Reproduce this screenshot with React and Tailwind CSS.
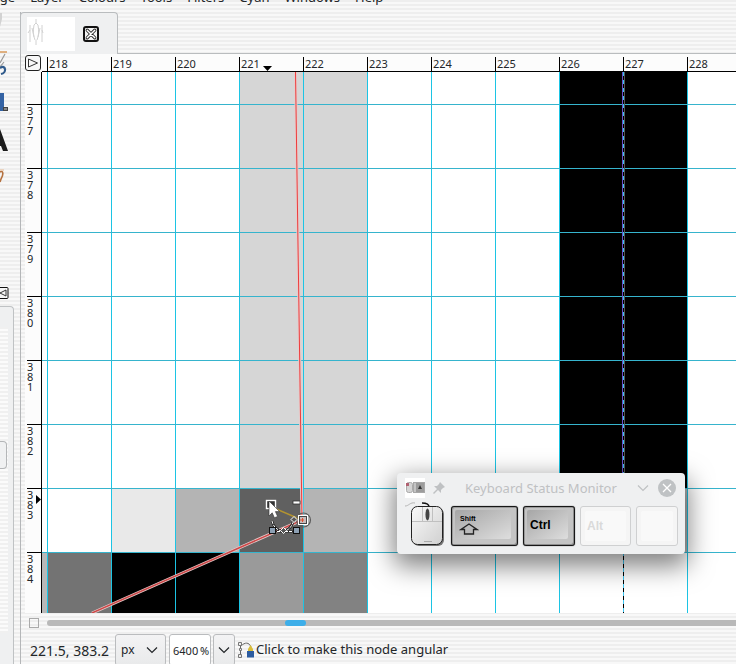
import React from 'react';

const COLUMNS = [218, 219, 220, 221, 222, 223, 224, 225, 226, 227, 228];
const ROWS = [377, 378, 379, 380, 381, 382, 383, 384];
const MENUS = ['Image', 'Layer', 'Colours', 'Tools', 'Filters', 'Cyan', 'Windows', 'Help'];

const STRIPES = 'bg-[repeating-linear-gradient(180deg,#eeeeee_0px,#eeeeee_2px,#f8f8f8_2px,#f8f8f8_4px)]';

// x, y, width, height and fill of each painted pixel
const PIXELS = [
    [197, 0, 128, 416, '#d6d6d6'],
    [517, 0, 128, 416, '#000000'],
    [69, 416, 64, 64, '#e9e9e9'],
    [133, 416, 64, 64, '#b4b4b4'],
    [197, 416, 64, 64, '#606060'],
    [261, 416, 64, 64, '#b4b4b4'],
    [517, 416, 128, 64, '#b4b4b4'],
    [0, 480, 5, 61, '#b8b8b8'],
    [5, 480, 64, 61, '#737373'],
    [69, 480, 128, 61, '#000000'],
    [197, 480, 64, 61, '#9a9a9a'],
    [261, 480, 64, 61, '#828282'],
];

const Chevron = ({ className }) => (
    <svg className={className} width="12" height="8" viewBox="0 0 12 8" fill="none" stroke="currentColor" strokeWidth="1.2">
        <path d="M1 1.5 6 6.5 11 1.5" />
    </svg>
);

const MenuBar = () => (
    <nav className="h-3 overflow-hidden">
        <div className="-mt-3 -ml-6 flex gap-[15px] text-[13px] leading-[18px]">
            {MENUS.map(menu => (
                <button key={menu} type="button">{menu}</button>
            ))}
        </div>
    </nav>
);

const ToolStrip = () => (
    <aside className="flex w-[21px] shrink-0 flex-col">
        <svg width="14" height="294" viewBox="0 0 14 294" className="shrink-0">
            <path d="M0 1h2v6l-2 8z" fill="#d2d2d2" />
            <path d="M0 40h7" stroke="#d89a5a" strokeWidth="1.5" />
            <path d="M0 51 5 42M0 55l4-5" stroke="#999" strokeWidth="1.2" fill="none" />
            <path d="M0 56c6-4 7 5 1 6" stroke="#315b8c" strokeWidth="2.2" fill="none" />
            <path d="M0 81h4v18H0z" fill="#3463a4" />
            <rect x="3.5" y="95.5" width="4" height="3" fill="#888" stroke="#444" />
            <path d="M0 117 8 139H3L1 134H0z" fill="#1b1b1b" />
            <path d="M0 160c3-2 4 2 1 7l-1 3" stroke="#b5713f" strokeWidth="1.6" fill="none" />
            <path d="M0 158h4" stroke="#e8c4a4" strokeWidth="1.2" />
            <rect x="-6" y="275.5" width="14" height="11" rx="1" fill="#f6f6f6" stroke="#111" />
            <path d="M6 278v6L0 281z" fill="none" stroke="#333" />
        </svg>
        <div className="flex w-[14px] flex-1 flex-col rounded-tr border-t border-r border-[#bfc2c4] bg-[#eff0f1]">
            <div className="mt-5 h-[306px] w-2 bg-[repeating-linear-gradient(180deg,#f0f0f0_0px,#f0f0f0_2px,#fbfbfb_2px,#fbfbfb_4px)]">
                <div className="mt-[114px] h-7 w-[7px] rounded-r border border-l-0 border-[#b4b6b8] bg-[#f0f1f2]"></div>
            </div>
        </div>
    </aside>
);

const ImageTab = () => (
    <div className="flex h-[42px] items-end">
        <div className="-ml-px flex h-[42px] w-[98px] items-center rounded-t border border-b-0 border-[#b9bcbe] bg-[#eff0f1] pl-1.5">
            <div className="h-[34px] w-12 bg-white">
                <svg width="20" height="34" viewBox="0 0 20 34" fill="none" stroke="#d2d2d2">
                    <path d="M9 2v5M7 8c-1 6-1 10 1 15M11 8c1 6 1 10-1 15M9 23v5M3 8v17M5 11l2 9M15 8v17M13 11l-2 9M7 8l2-2 2 2M3 13 1 16M15 13l1 3" />
                </svg>
            </div>
            <button type="button" aria-label="Close image" className="ml-2 flex size-4 items-center justify-center rounded-[3px] border-2 border-[#111] bg-[#f4f4f4]">
                <svg width="14" height="14" viewBox="0 0 14 14" className="shrink-0">
                    <path d="M3.2 3.2 10.8 10.8M10.8 3.2 3.2 10.8" stroke="#222" strokeWidth="3.2" strokeLinecap="round" />
                    <path d="M3.2 3.2 10.8 10.8M10.8 3.2 3.2 10.8" stroke="#fff" strokeWidth="1.5" strokeLinecap="round" />
                </svg>
            </button>
        </div>
        <div className="flex-1 self-stretch border-b border-[#b9bcbe]"></div>
    </div>
);

const TopRuler = () => (
    <div className="flex h-[18px] bg-[#fcfcfc]">
        <button type="button" aria-label="Image menu" className="mt-px mr-px flex size-4 shrink-0 items-center justify-center rounded-[3px] border border-[#222] bg-[#f8f8f8]">
            <svg width="14" height="14" viewBox="0 0 14 14" fill="none" stroke="#333" className="shrink-0">
                <path d="M2.5 3v8L11.5 7z" />
            </svg>
        </button>
        <div className="relative flex min-w-0 flex-1 overflow-hidden border-b border-black pl-[5px]">
            {COLUMNS.map(column => (
                <div key={column} className="mt-[3px] w-16 shrink-0 border-l border-black pl-px text-[11px] leading-[14px]">{column}</div>
            ))}
            <svg width="9" height="5" viewBox="0 0 9 5" className="absolute bottom-0 left-[221px]">
                <path d="M0 0h9L4.5 5z" />
            </svg>
        </div>
    </div>
);

const SideRuler = () => (
    <div className="relative w-[17px] shrink-0 overflow-hidden border-r border-black bg-[#fcfcfc] pt-8">
        {ROWS.map(row => (
            <div key={row} className="ml-0.5 flex h-16 flex-col border-t border-black pt-px text-[11px] leading-[10px]">
                {String(row).split('').map((digit, i) => (
                    <span key={i}>{digit}</span>
                ))}
            </div>
        ))}
        <svg width="5" height="9" viewBox="0 0 5 9" className="absolute top-[423px] right-0">
            <path d="M0 0v9L5 4.5z" />
        </svg>
    </div>
);

const Canvas = () => (
    <svg width="100%" height="541" className="block min-w-0 flex-1 bg-white">
        <defs>
            <pattern id="grid" x="5" y="32" width="64" height="64" patternUnits="userSpaceOnUse">
                <path d="M.5 0v64" stroke="#1cc4e4" />
                <path d="M0 .5h64" stroke="#36b4cd" />
            </pattern>
        </defs>
        {PIXELS.map(([x, y, w, h, fill]) => (
            <rect key={`${x}-${y}`} x={x} y={y} width={w} height={h} fill={fill} />
        ))}
        <rect width="100%" height="100%" fill="url(#grid)" />

        {/* selected layer edge */}
        <path d="M580.5 0V416" stroke="#6a50c8" />
        <path d="M582.5 0V416" stroke="#555" />
        <path d="M581.5 0V541" stroke="#000" />
        <path d="M581.5 0V541" stroke="#3cc4f0" strokeDasharray="4 4" />

        {/* path being edited */}
        <path d="M253.5 0 260 448 50 541" fill="none" stroke="#e6cccc" strokeWidth="3" />
        <path d="M253.5 0 260 448" fill="none" stroke="#ee3c3c" />
        <path d="M260 448 50 541" fill="none" stroke="#cc4848" strokeWidth="1.4" />
        <path d="M232 436 260 448" stroke="#b39430" strokeWidth="1.4" />
        <rect x="224.5" y="428.5" width="9" height="8" fill="#333" stroke="#fff" strokeWidth="1.4" />
        <circle cx="261.5" cy="448" r="7" fill="none" stroke="#5c5c5c" strokeWidth="1.2" />
        <rect x="256.5" y="443.5" width="9" height="9" fill="#bbb" stroke="#fff" />
        <rect x="257.5" y="444.5" width="7" height="7" fill="#c8bcbc" stroke="#444" />
        <path d="M258 448h4M260.5 446v4" stroke="#e05030" />
        <rect x="251" y="429" width="7" height="3" fill="#fff" stroke="#333" strokeWidth=".8" />

        {/* pointer with the node-edit badge */}
        <path d="M230 449c1 5 5 10 11 10s9-5 11-11" fill="none" stroke="#222" strokeWidth="2.4" />
        <path d="M231 459.500h22" stroke="#222" strokeWidth="2" />
        <path d="M231 459.500h22M230 449c1 5 5 10 11 10s9-5 11-11" fill="none" stroke="#fff" strokeDasharray="3 1" />
        <rect x="227.5" y="455.5" width="6" height="6" fill="#8da0b4" stroke="#111" />
        <rect x="251.5" y="455.5" width="6" height="6" fill="#8da0b4" stroke="#111" />
        <path d="M241.5 455.500l3 3-3 3-3-3zM252 444.5l3 3-3 3-3-3z" fill="#555" stroke="#fff" />
        <path d="M227 429v15l3.2-3.2 2.2 5 3.2-1.4-2.2-4.8h4.2z" fill="#fff" stroke="#333" strokeWidth=".6" />
    </svg>
);

const Key = ({ className, on, children }) => (
    <div className={`${className} flex h-10 shrink-0 rounded-[3px] border ${on
        ? 'border-[#171717] bg-[#c4c4c4] p-[3px] pr-1.5 pb-1.5 shadow-[inset_-1px_-1px_0_#8c8c8c,inset_1px_1px_0_#9a9a9a,0_0_1px_#222]'
        : 'border-[#cfd0d1] bg-[#f5f5f5] p-1'}`}>
        <div className={`flex flex-1 flex-col justify-center rounded-[2px] font-['Liberation_Sans',sans-serif] font-bold ${on
            ? 'bg-linear-to-br from-[#a6a6a6] to-[#dedede] text-black'
            : 'bg-[#f9f9f9] text-[#dadada]'}`}>
            {children}
        </div>
    </div>
);

const KeyboardMonitor = () => (
    <section className="absolute top-[473px] left-[397px] w-72 rounded-[4px] bg-[#eff0f1] pb-2 shadow-[0_9px_26px_3px_rgba(0,0,0,0.5)]">
        <header className="flex h-[29px] items-center pl-2 text-[#bfc1c3]">
            <svg width="20" height="20" viewBox="0 0 20 20" className="shrink-0">
                <path d="M0 0h20v20H0z" fill="#fff" />
                <rect x="1.5" y="4.5" width="6" height="10" rx="2" fill="#d4d4d4" stroke="#aaa" />
                <path d="M1 5h3v3H1z" fill="#b06070" />
                <rect x="8.5" y="4.5" width="11" height="10" fill="#c4c4c4" stroke="#a8a8a8" />
                <rect x="11" y="5" width="8" height="9" fill="#9c9c9c" />
                <path d="M13 11l2-4 2 4z" fill="#333" />
            </svg>
            <svg width="12" height="12" viewBox="0 0 12 12" className="ml-2 shrink-0" fill="currentColor">
                <path d="M7 0 12 5 10 6 8 8 8 11 5 8 1 12 0 11 4 7 1 4 4 4 6 2z" />
            </svg>
            <h2 className="ml-5 flex-1 text-[13px] leading-5 whitespace-nowrap">Keyboard Status Monitor</h2>
            <button type="button" aria-label="Minimise" className="mr-[9px]"><Chevron /></button>
            <button type="button" aria-label="Close" className="mr-[9px] flex size-[18px] items-center justify-center rounded-full bg-[#bfc2c4]">
                <svg width="10" height="10" viewBox="0 0 10 10" stroke="#fff" strokeWidth="1.3">
                    <path d="M1 1 9 9M9 1 1 9" />
                </svg>
            </button>
        </header>
        <div className="flex items-end gap-[5px] pr-[7px] pl-2">
            <svg width="41" height="44" viewBox="0 0 41 44" className="shrink-0">
                <defs>
                    <linearGradient id="mouse" x1="0" y1="0" x2="1" y2="1">
                        <stop offset="0" stopColor="#fafafa" />
                        <stop offset="1" stopColor="#d0d0d0" />
                    </linearGradient>
                </defs>
                <path d="M0 4c4 0 5-4 10-3" fill="none" stroke="#b4b4b4" />
                <path d="M17 1c5 0 7 1 7 4" fill="none" stroke="#111" strokeWidth="1.5" />
                <rect x="8" y="6" width="31" height="38" rx="6" fill="#777" />
                <rect x="6.5" y="4.5" width="31" height="38" rx="6" fill="url(#mouse)" stroke="#222" />
                <path d="M7 19.5h30M17.5 5v14M27.5 5v14" stroke="#c0c0c0" fill="none" />
                <ellipse cx="22.5" cy="12.5" rx="2" ry="6" fill="#444" />
                <path d="M19 39.5h8" stroke="#aaa" />
            </svg>
            <Key on className="w-[67px]">
                <span className="pl-[5px] text-[7px] leading-2">Shift</span>
                <svg width="20" height="12" viewBox="0 0 20 12" className="ml-1 fill-[#bbb] stroke-[#222]">
                    <path d="M10 1 18 6.5H14.500v4.5H5.500V6.5H2z" strokeWidth="1.3" />
                </svg>
            </Key>
            <Key on className="w-[52px]"><span className="pl-[3px] text-[12px]">Ctrl</span></Key>
            <Key className="w-[51px]"><span className="pl-0.5 text-[12px]">Alt</span></Key>
            <Key className="w-[42px]" />
        </div>
    </section>
);

const StatusBar = () => (
    <footer className="mt-px flex h-8 items-center pl-[5px] text-[13px]">
        <output className="w-[85px] shrink-0 text-[14px] whitespace-nowrap">221.5, 383.2</output>
        <div className="relative h-8 w-[51px] shrink-0">
            <select aria-label="Unit" className="h-8 w-full appearance-none rounded-[3px] border border-[#babcbe] bg-linear-to-b from-[#f3f3f4] to-[#e9eaeb] pl-[5px] text-[12px]">
                <option>px</option>
            </select>
            <Chevron className="pointer-events-none absolute top-3 right-2" />
        </div>
        <input aria-label="Zoom" defaultValue={'6400\u2009%'} className="ml-[3px] h-8 w-[42px] shrink-0 rounded-[3px] border border-[#babcbe] bg-white pl-[3px] text-[11px]" />
        <button type="button" aria-label="Zoom levels" className="ml-0.5 flex h-8 w-[22px] shrink-0 items-center justify-center rounded-[3px] border border-[#babcbe] bg-linear-to-b from-[#f3f3f4] to-[#e9eaeb]">
            <Chevron />
        </button>
        <svg width="16" height="16" viewBox="0 0 16 16" className="ml-[3px] shrink-0" fill="none">
            <path d="M2.500 4v9M3 4c4-4 8-4 10 1" stroke="#666" />
            <path d="M.5.5h3v3h-3zM1.5 6.5h2v2h-2zM.5 12.5h3v3h-3z" fill="#eee" stroke="#777" />
            <path d="M10 9V7l2.500-4L15 7v2z" fill="#d9bd3a" />
            <path d="M9 9h7v6.5H9z" fill="#2c5ca0" />
        </svg>
        <span className="ml-0.5 whitespace-nowrap">Click to make this node angular</span>
    </footer>
);

export default function App() {
    return (
        <main className={`relative h-screen overflow-hidden font-['Noto_Sans',sans-serif] text-[#232629] ${STRIPES}`}>
            <MenuBar />
            <div className="flex">
                <ToolStrip />
                <div className="-ml-px flex min-w-0 flex-1 flex-col border-l border-[#b4b6b8] pl-1">
                    <div className="-ml-1"><ImageTab /></div>
                    <TopRuler />
                    <div className="flex h-[541px]">
                        <SideRuler />
                        <Canvas />
                    </div>
                    <div className="flex h-5 items-center">
                        <button type="button" aria-label="Quick mask" className="ml-1 size-[10px] border border-[#aaa]"></button>
                        <div className="ml-2 h-1.5 flex-1 rounded-l-full bg-[#b9b9b9]">
                            <div className="ml-[238px] h-1.5 w-[21px] rounded-full bg-[#3daee9]"></div>
                        </div>
                    </div>
                    <StatusBar />
                </div>
            </div>
            <KeyboardMonitor />
        </main>
    );
}
